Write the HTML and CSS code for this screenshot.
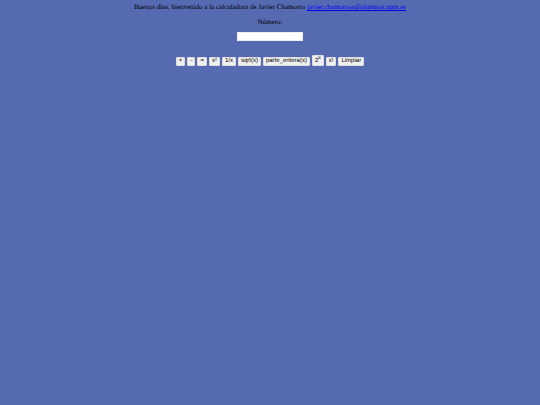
FILE: index.html
```html
<!DOCTYPE html>
<html lang="es">
<head>
<meta charset="utf-8">
<title>Calculadora</title>
<link rel="stylesheet" href="styles.css">
</head>
<body>
<header class="greeting">Buenos días, bienvenido a la calculadora de Javier Chamorro <a href="mailto:javier.chamorroa@alumnos.upm.es">javier.chamorroa@alumnos.upm.es</a></header>
<main class="calculator">
<label class="label" for="number">Número:</label>
<input class="number" id="number" type="text">
<div class="keys">
<button type="button">+</button>
<button type="button">-</button>
<button type="button">=</button>
<button type="button">x²</button>
<button type="button">1/x</button>
<button type="button">sqrt(x)</button>
<button type="button">parte_entera(x)</button>
<button type="button">2<sup>x</sup></button>
<button type="button">x!</button>
<button type="button">Limpiar</button>
</div>
</main>
</body>
</html>
```
FILE: styles.css
```css
body {
  margin: 0;
  padding: 3px;
  background: #566ab2;
  color: #000;
  font: 7px/8px "Liberation Serif", serif;
  text-align: center;
  text-rendering: geometricPrecision;
}

a {
  color: #00e;
}

.calculator {
  display: flex;
  flex-direction: column;
  align-items: center;
  padding-top: 7px;
}

.number {
  box-sizing: border-box;
  width: 66px;
  height: 9px;
  margin: 6px 0 14px;
  padding: 0 1px;
  border: 1px solid #eee;
  background: #fff;
  font: 6px/7px "Liberation Sans", sans-serif;
}

.keys {
  display: flex;
  flex-wrap: wrap;
  justify-content: center;
  align-items: flex-end;
  gap: 2px;
}

.keys button {
  padding: 0 2px;
  border: 1px solid #ddd;
  border-radius: 1px;
  background: #efefef;
  color: #000;
  font: 6px/7px "Liberation Sans", sans-serif;
  text-rendering: geometricPrecision;
}

.keys sup {
  font-size: 5px;
  line-height: 5px;
}
```
